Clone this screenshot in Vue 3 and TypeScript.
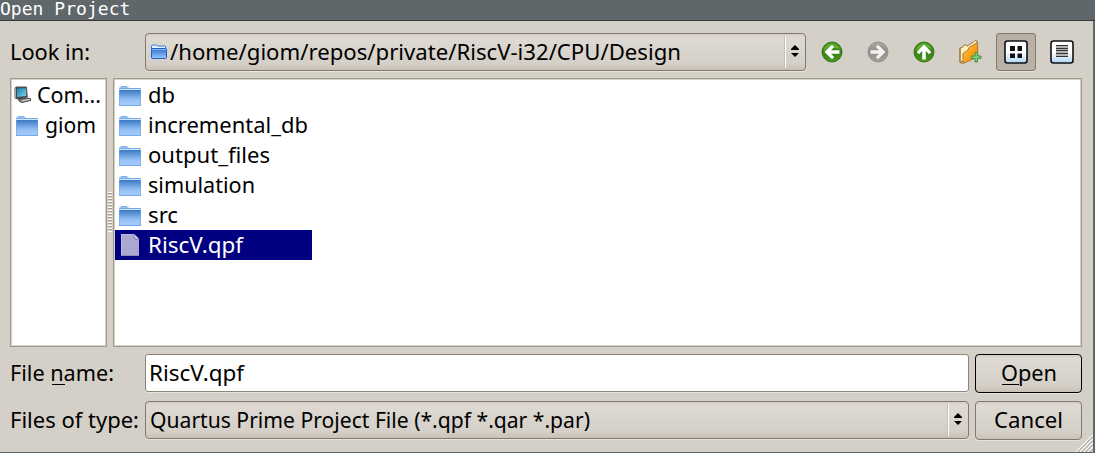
<script setup lang="ts">
import { defineComponent, h } from 'vue'

interface Entry { name: string; width: number; selected?: boolean }

const entries: Entry[] = [
  { name: 'db', width: 27 },
  { name: 'incremental_db', width: 160 },
  { name: 'output_files', width: 122 },
  { name: 'simulation', width: 107 },
  { name: 'src', width: 30 },
  { name: 'RiscV.qpf', width: 95, selected: true },
]

// Single line of text set to a fixed advance width, with an optional accelerator underline.
const Label = defineComponent({
  props: {
    text: { type: String, required: true },
    w: { type: Number, required: true },
    mark: { type: Array as unknown as () => number[], default: null },
  },
  setup: (p) => () =>
    h('svg', { width: p.w, height: 30, style: { display: 'block', overflow: 'visible', flex: 'none' } }, [
      h('text', { x: 0, y: 23, fill: 'currentColor', textLength: p.w, lengthAdjust: 'spacingAndGlyphs' }, p.text),
      p.mark ? h('rect', { x: p.mark[0], y: 26, width: p.mark[1], height: 1, fill: 'currentColor' }) : null,
    ]),
})
</script>

<template>
  <div class="window">
    <svg width="0" height="0" class="defs">
      <defs>
        <linearGradient id="folderFill" x1="0" y1="0" x2="0" y2="1">
          <stop offset="0" stop-color="#3a78c4" /><stop offset=".5" stop-color="#86b5ee" /><stop offset=".7" stop-color="#9dc4f8" /><stop offset="1" stop-color="#a6cbfa" />
        </linearGradient>
        <linearGradient id="smallFill" x1="0" y1="0" x2="0" y2="1">
          <stop offset="0" stop-color="#2d6fd0" /><stop offset="1" stop-color="#9cc8ff" />
        </linearGradient>
        <linearGradient id="tile" x1="0" y1="0" x2="0" y2="1">
          <stop offset=".5" stop-color="#fff" /><stop offset="1" stop-color="#add6fa" />
        </linearGradient>
        <linearGradient id="green" x1="0" y1="0" x2="0" y2="1">
          <stop offset="0" stop-color="#4ca223" /><stop offset=".5" stop-color="#37801a" /><stop offset="1" stop-color="#48991f" />
        </linearGradient>
        <linearGradient id="grey" x1="0" y1="0" x2="0" y2="1">
          <stop offset="0" stop-color="#aaa8a4" /><stop offset=".5" stop-color="#918f8b" /><stop offset="1" stop-color="#a3a19d" />
        </linearGradient>
        <linearGradient id="gold" x1="0" y1="0" x2="1" y2="1">
          <stop offset="0" stop-color="#ffd06a" /><stop offset=".6" stop-color="#f59c0d" /><stop offset="1" stop-color="#ffb940" />
        </linearGradient>
        <linearGradient id="screen" x1="0" y1="0" x2="1" y2="1">
          <stop offset="0" stop-color="#1583ad" /><stop offset="1" stop-color="#7fd2ed" />
        </linearGradient>
        <symbol id="folder" viewBox="0 0 24 22">
          <path d="M2 3.500V2.500L3 1.500h6l1 1v1" fill="#9cc6f3" stroke="#7fb0e8" />
          <rect x="1" y="3" width="22" height="1" fill="#76a9e6" />
          <rect x="1" y="4" width="22" height="1" fill="#cfe5fa" />
          <rect x="1" y="5" width="22" height="16" fill="url(#folderFill)" />
          <path d="M1.500 5v15M22.500 5v15" stroke="#6ba6ee" stroke-opacity=".5" />
          <path d="M1 20.500h22" stroke="#74a9ea" />
        </symbol>
      </defs>
    </svg>

    <header class="title"><span>Open Project</span></header>

    <main class="body">
      <div class="row top">
        <div class="caption"><Label text="Look in:" :w="80" /></div>
        <div class="combo path">
          <svg class="small-folder" width="18" height="16" viewBox="0 0 18 16">
            <path d="M1.500 3V2l1-1h4l1 1h7.500l.5.5V5h-14z" fill="#e3f1ff" stroke="#2b7edb" />
            <rect x="1.500" y="4.500" width="15" height="10" rx="1" fill="url(#smallFill)" stroke="#1c62c4" />
            <path d="M2 5.500h14" stroke="#89baf4" />
          </svg>
          <Label text="/home/giom/repos/private/RiscV-i32/CPU/Design" :w="511" />
          <span class="stepper"><svg width="8" height="12" viewBox="0 0 8 12"><path d="M4 0l4 4v1H0V4zM0 8h8L4 12z" /></svg></span>
        </div>
        <div class="tools">
          <span class="tool"><svg width="24" height="24" viewBox="0 0 24 24">
            <circle cx="12" cy="12" r="10" fill="url(#green)" stroke="#39761d" />
            <path d="M4 9a8.500 7 0 0 1 16 0q-8-3-16 2z" fill="#8bc951" opacity=".45" />
            <path d="M4.500 12l7.500-7.300 2.200 2.200L10.900 10.200H19.500v3.600h-8.600l3.300 3.300-2.200 2.200z" fill="#fff" />
          </svg></span>
          <span class="tool"><svg width="24" height="24" viewBox="0 0 24 24">
            <circle cx="12" cy="12" r="10" fill="url(#grey)" stroke="#96938e" />
            <path d="M19.500 12l-7.500-7.300-2.200 2.200 3.300 3.300H4.500v3.600h8.600l-3.300 3.300 2.200 2.200z" fill="#f4f2ee" />
          </svg></span>
          <span class="tool"><svg width="24" height="24" viewBox="0 0 24 24">
            <circle cx="12" cy="12" r="10" fill="url(#green)" stroke="#39761d" />
            <path d="M4 9a8.500 7 0 0 1 16 0q-8-3-16 2z" fill="#8bc951" opacity=".45" />
            <path d="M12 4.500l7.300 7.500-2.200 2.200-3.300-3.300V19.500h-3.600v-8.600l-3.300 3.300-2.200-2.200z" fill="#fff" />
          </svg></span>
          <span class="tool new-folder"><svg width="26" height="26" viewBox="0 0 26 26">
            <path d="M3 23V9l2.500-.5 1-2 2.500-.7 1 1.200L16.500 3l1.500-1.500 2 .3.500 16z" fill="#fff0ba" stroke="#9c7443" stroke-linejoin="round" />
            <path d="M6 23.500V14.500l5-3.500 1-2.500 8.500-5 .3 14.500L7 24z" fill="url(#gold)" stroke="#b07a33" stroke-linejoin="round" />
            <path d="M3 9v14.500l2.500 1 2-1" fill="none" stroke="#99713d" />
            <path d="M18 13.500h2.500v3.500H24v2.500h-3.500V23H18v-3.500h-3.500V17H18z" fill="#82ce78" stroke="#429345" stroke-linejoin="round" />
          </svg></span>
          <span class="tool pressed"><svg width="24" height="24" viewBox="0 0 24 24">
            <rect x="1" y="1" width="22" height="22" rx="2.500" fill="url(#tile)" stroke="#111" stroke-width="1.600" />
            <path d="M6 6h5v5H6zM13.500 6h4.500v5h-4.500zM6 13.500h5v4.500H6zM13.500 13.500h4.500v4.500h-4.500z" fill="#111" />
          </svg></span>
          <span class="tool"><svg width="24" height="24" viewBox="0 0 24 24">
            <rect x="1" y="1" width="22" height="22" rx="2.500" fill="url(#tile)" stroke="#111" stroke-width="1.600" />
            <path d="M6 5h12v12H6z" fill="#b4b4b4" />
            <path d="M6 5.500h12M6 8.500h12M6 10.500h12M6 13.500h12M6 16.500h12" stroke="#333" />
          </svg></span>
        </div>
      </div>

      <div class="panes">
        <div class="pane side">
          <div class="item"><svg class="pc" width="18" height="18" viewBox="0 0 18 18">
            <path d="M5 13.500l8-1.500 3.500.5v2L8 16.500l-3-1.500z" fill="#8d8d8d" stroke="#444" />
            <path d="M8 15l8-1.700" stroke="#d5d5d5" />
            <path d="M1 2.500l1-1.500h10.500l.7 10L5 13.500 1 12z" fill="#444" stroke="#555" stroke-linejoin="round" />
            <path d="M1.500 2.500V12" stroke="#aaa" />
            <path d="M3 2.200h9l.2 7.800L3 11z" fill="url(#screen)" />
          </svg><Label text="Com..." :w="64" /></div>
          <div class="item home"><svg width="24" height="22"><use href="#folder" /></svg><Label text="giom" :w="51" /></div>
        </div>
        <div class="splitter"><i /></div>
        <div class="pane files">
          <div v-for="e in entries" :key="e.name" class="item" :class="{ selected: e.selected }">
            <svg v-if="!e.selected" width="24" height="22"><use href="#folder" /></svg>
            <svg v-else width="24" height="22" viewBox="0 0 24 22">
              <path d="M3 0h13l5 5v17H3z" fill="#aaa8d3" />
              <path d="M3.500 22V.5H16" fill="none" stroke="#bcbadf" />
              <path d="M15 0l6 6q-4 0-4.500-1T15 0z" fill="#8583b7" /><path d="M16 0l5 5-3.500-.8z" fill="#dddcf0" />
              <path d="M3 21.500h18" stroke="#8d8bbd" />
            </svg>
            <Label :text="e.name" :w="e.width" />
          </div>
        </div>
      </div>

      <div class="row name">
        <div class="caption"><Label text="File name:" :w="104" :mark="[42, 13]" /></div>
        <div class="field"><Label text="RiscV.qpf" :w="95" /></div>
        <div class="button primary"><Label text="Open" :w="56" :mark="[1, 17]" /></div>
      </div>
      <div class="row type">
        <div class="caption"><Label text="Files of type:" :w="129" /></div>
        <div class="combo filter">
          <Label text="Quartus Prime Project File (*.qpf *.qar *.par)" :w="440" />
          <span class="stepper"><svg width="8" height="12" viewBox="0 0 8 12"><path d="M4 0l4 4v1H0V4zM0 8h8L4 12z" /></svg></span>
        </div>
        <div class="button"><Label text="Cancel" :w="69" /></div>
      </div>
    </main>
    <svg class="grip" width="17" height="17" viewBox="0 0 17 17">
      <path d="M0 17L17 0M4 17L17 4M8 17L17 8M12 17l5-5" stroke="#fff" stroke-width="1.200" />
      <path d="M1.500 17L17 1.500M5.500 17L17 5.500M9.500 17L17 9.500M13.500 17l3.500-3.500" stroke="#9d978c" />
    </svg>
  </div>
</template>

<style>
body { margin: 0; overflow: hidden; }
</style>

<style scoped>
* { box-sizing: border-box; }
.window {
  position: relative; width: 1095px; height: 453px; background: #d4cfc7; color: #000;
  border-right: 2px solid #5f676a; border-bottom: 1px solid #5f676a;
  font: 22px "Noto Sans", "Open Sans", sans-serif;
}
.defs { position: absolute; }
.title { width: 1095px; height: 21px; background: #5f676a; border-bottom: 1px solid #333a3c; color: #fff; font: 18px/17px "DejaVu Sans Mono", monospace; }
.title span { display: block; white-space: pre; letter-spacing: .03px; }
.body { padding: 12px 11px 0 10px; }
.row { display: flex; }
.top { height: 38px; }
.caption { width: 135px; padding-top: 4px; flex: none; }
.combo, .button {
  display: flex; border: 1px solid #82796c; border-radius: 4px;
  background: linear-gradient(#d4cfc5, #ded9d2 10%, #d4cfc7 82%, #c8c1b5);
  box-shadow: 0 1px #e8e4dd;
}
.combo { position: relative; height: 38px; padding-top: 3px; }
.path { width: 661px; padding-left: 4px; }
.small-folder { margin: 7px 2px 0 0; }
.filter { width: 824px; padding-left: 4px; }
.stepper { position: absolute; right: 0; top: 2px; bottom: 2px; width: 20px; border-left: 1px solid #fff; box-shadow: -1px 0 #c5beb4; }
.stepper svg { display: block; margin: 9px 0 0 5px; }
.tools { display: flex; gap: 6px; margin-left: 6px; }
.tool { display: flex; width: 40px; height: 38px; align-items: center; justify-content: center; border: 1px solid transparent; border-radius: 3px; }
.tool svg { display: block; flex: none; margin: -1px 1px 0 0; }
.tool.new-folder svg { margin: 0 1px 0 0; }
.pressed { background: #b9b1a5; border-color: #81786d; box-shadow: 0 1px #e8e4dd; }
.tool.pressed svg, .tool:last-child svg { margin: 0; }
.panes { display: flex; height: 269px; margin-top: 7px; }
.pane { background: #fff; border: 1px solid #9e998b; box-shadow: inset 0 0 0 1px #d5d1c7; padding: 1px; }
.side { width: 97px; }
.files { width: 969px; }
.splitter { width: 6px; padding: 114px 1px 0; }
.splitter i { display: block; height: 40px; background: repeating-linear-gradient(#fff 0 1px, #a39d91 1px 2px, #d4cfc7 2px 3px); }
.item { display: flex; height: 30px; }
.item > svg:first-child { flex: none; margin: 5px 6px 0 3px; }
.selected > svg:first-child { margin-top: 4px; }
.item > .pc:first-child { margin: 6px 5px 0 2px; }
.files .item { width: 197px; }
.selected { background: #000080; color: #fff; }
.name { height: 40px; margin-top: 7px; }
.field { width: 824px; height: 38px; padding: 3px 0 0 3px; background: #fff; border: 1px solid #8d8577; border-radius: 3px; box-shadow: 0 1px #e8e4dd; }
.button { width: 107px; height: 39px; margin-left: 6px; padding-top: 3px; justify-content: center; }
.button.primary { border-color: #000; }
.type { margin-top: 7px; }
.grip { position: absolute; right: 0; bottom: 0; }
</style>
